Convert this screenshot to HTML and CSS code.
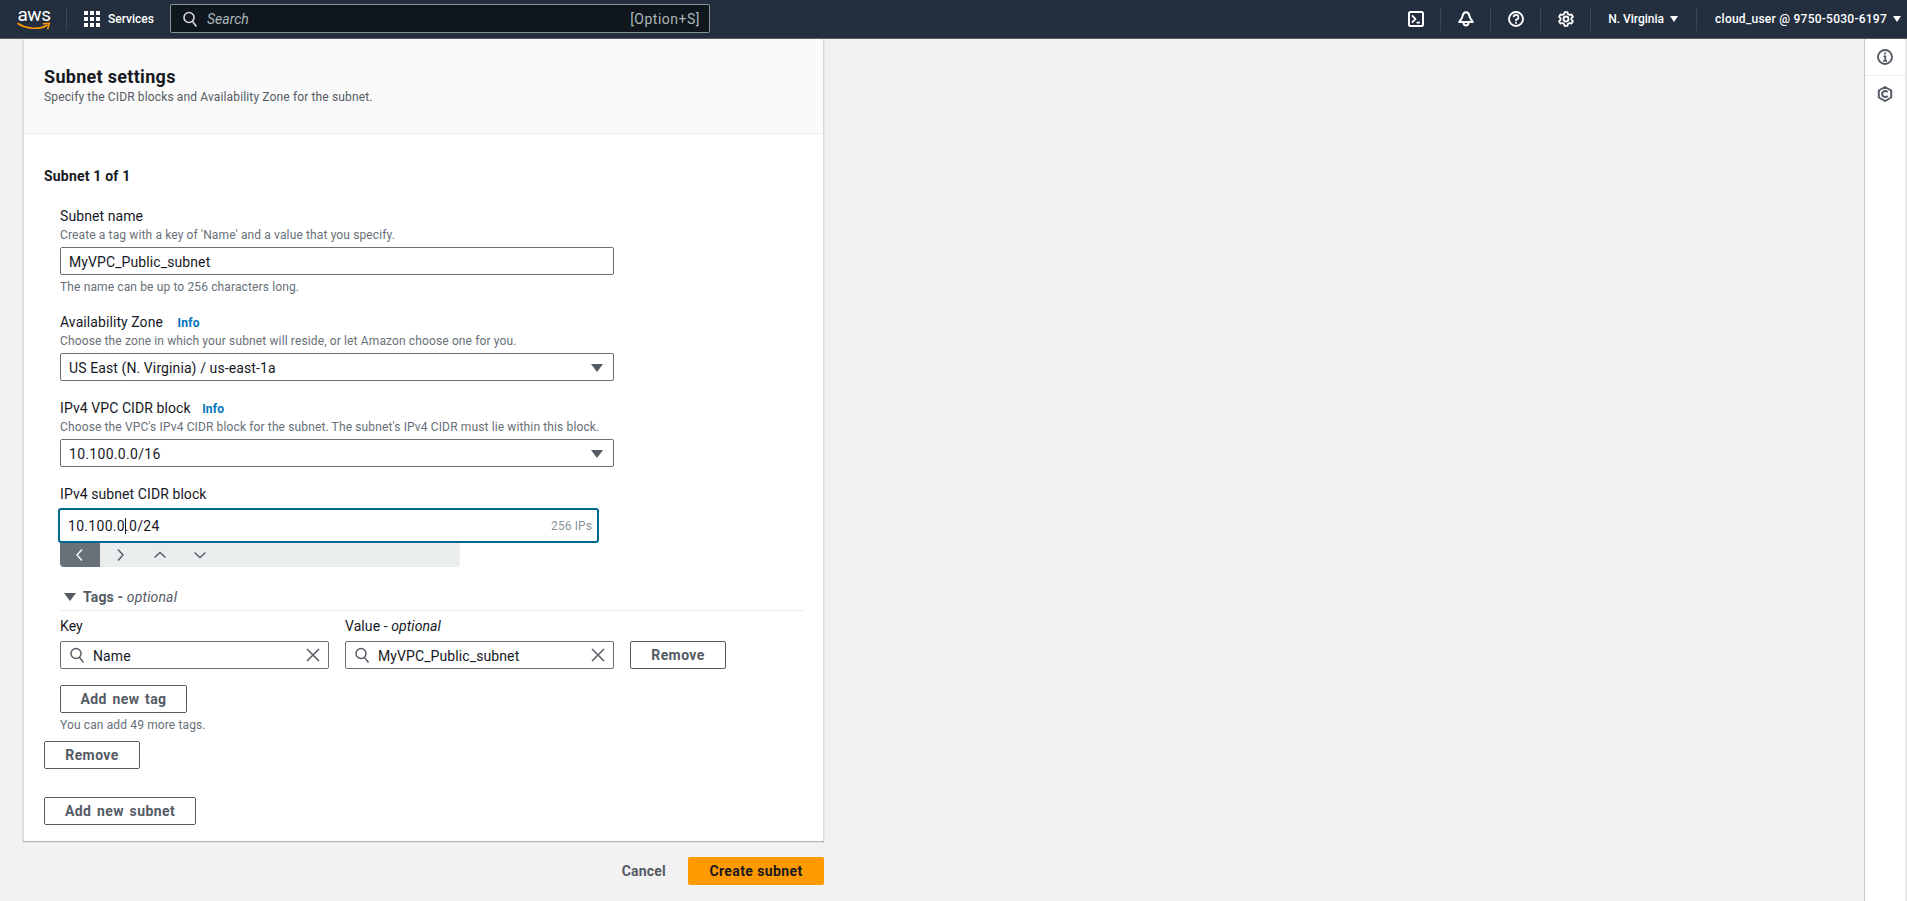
FILE: index.html
```html
<!DOCTYPE html>
<html lang="en">
<head>
<meta charset="utf-8">
<title>Create subnet</title>
<link rel="stylesheet" href="styles.css">
</head>
<body>
<header class="topbar">
  <a class="logo">
    <span class="logo-text">aws</span>
    <svg class="logo-smile" viewBox="0 0 34 9" width="34" height="9"><path d="M1 1.5C9 7 22 8 30 3.2" fill="none" stroke="#f90" stroke-width="1.6" stroke-linecap="round"/><path d="M26.5 1.8 32.4 1.2 30.8 6.6" fill="none" stroke="#f90" stroke-width="1.5" stroke-linecap="round" stroke-linejoin="round"/></svg>
  </a>
  <span class="sep sep-logo"></span>
  <a class="services">
    <svg class="grid-icon" viewBox="0 0 16 16" width="16" height="16"><path d="M0 0h4v4H0zM6 0h4v4H6zM12 0h4v4h-4zM0 6h4v4H0zM6 6h4v4H6zM12 6h4v4h-4zM0 12h4v4H0zM6 12h4v4H6zM12 12h4v4h-4z" fill="#fff"/></svg>
    <span>Services</span>
  </a>
  <div class="search">
    <svg viewBox="0 0 16 16" width="16" height="16"><circle cx="7" cy="6.5" r="5" fill="none" stroke="#d5dbdb" stroke-width="1.6"/><path d="M10.5 10.5l4 5" stroke="#d5dbdb" stroke-width="1.6"/></svg>
    <span class="search-text">Search</span>
    <span class="search-key">[Option+S]</span>
  </div>
  <div class="top-right">
    <a class="top-icon"><svg viewBox="0 0 16 16" width="16" height="16"><rect x="1" y="1" width="14" height="14" rx="1.5" fill="none" stroke="#fff" stroke-width="2"/><path d="M4 4.4 7.4 8 4 11.6" fill="none" stroke="#fff" stroke-width="1.8"/><path d="M8.5 11.6h3.4" stroke="#fff" stroke-width="1.8"/></svg></a>
    <span class="sep"></span>
    <a class="top-icon"><svg viewBox="0 0 16 16" width="16" height="16"><path d="M8 1.2c2 0 3 1.6 3.4 3.6.3 1.7.9 2.8 1.8 3.8l1.6 2.4H1.2l1.6-2.4c.9-1 1.500-2.100 1.800-3.800C5 2.800 6 1.200 8 1.200z" fill="none" stroke="#fff" stroke-width="2" stroke-linejoin="round"/><path d="M5.600 12a2.400 2.400 0 0 0 4.800 0" fill="none" stroke="#fff" stroke-width="2"/></svg></a>
    <span class="sep"></span>
    <a class="top-icon"><svg viewBox="0 0 16 16" width="16" height="16"><circle cx="8" cy="8" r="7" fill="none" stroke="#fff" stroke-width="1.900"/><path d="M5.600 6.200A2.400 2.400 0 1 1 8 8.600v1.300" fill="none" stroke="#fff" stroke-width="1.700"/><path d="M8 10.800v1.900" stroke="#fff" stroke-width="1.700"/></svg></a>
    <span class="sep"></span>
    <a class="top-icon"><svg viewBox="0 0 16 16" width="16" height="16"><circle cx="8" cy="8" r="2.500" fill="none" stroke="#fff" stroke-width="1.800"/><path d="M6.600 1.100h2.800l.5 1.900 1.700 1 1.900-.6 1.400 2.400-1.400 1.300v1.800l1.400 1.300-1.400 2.400-1.900-.6-1.700 1-.5 1.900H6.600l-.5-1.900-1.700-1-1.900.6L1.100 10.200l1.400-1.300V7.100L1.100 5.800l1.400-2.400 1.900.6 1.700-1z" fill="none" stroke="#fff" stroke-width="1.800" stroke-linejoin="round"/></svg></a>
    <span class="sep"></span>
    <a class="top-menu region"><span>N. Virginia</span><i class="tri-white"></i></a>
    <span class="sep"></span>
    <a class="top-menu account"><span>cloud_user @ 9750-5030-6197</span><i class="tri-white"></i></a>
  </div>
</header>

<div class="page">
  <main class="content">
    <section class="card">
      <div class="card-head">
        <h2>Subnet settings</h2>
        <p>Specify the CIDR blocks and Availability Zone for the subnet.</p>
      </div>
      <div class="card-body">
        <h3 class="subnet-title">Subnet 1 of 1</h3>
        <div class="subnet">
          <div class="field">
            <div class="label">Subnet name</div>
            <div class="desc">Create a tag with a key of 'Name' and a value that you specify.</div>
            <div class="input">MyVPC_Public_subnet</div>
            <div class="hint">The name can be up to 256 characters long.</div>
          </div>
          <div class="field">
            <div class="label">Availability Zone <a class="info info-wide">Info</a></div>
            <div class="desc">Choose the zone in which your subnet will reside, or let Amazon choose one for you.</div>
            <div class="input select"><span>US East (N. Virginia) / us-east-1a</span><i class="tri-dark"></i></div>
          </div>
          <div class="field">
            <div class="label">IPv4 VPC CIDR block <a class="info">Info</a></div>
            <div class="desc">Choose the VPC's IPv4 CIDR block for the subnet. The subnet's IPv4 CIDR must lie within this block.</div>
            <div class="input select num"><span>10.100.0.0/16</span><i class="tri-dark"></i></div>
          </div>
          <div class="field field-cidr">
            <div class="label">IPv4 subnet CIDR block</div>
            <div class="cidr-input"><span>10.100.0<span class="caret"></span>.0/24</span><small>256 IPs</small></div>
            <div class="cidr-tools">
              <a class="tool active"><svg viewBox="0 0 16 16" width="16" height="16"><path d="M10 2.500 5 8l5 5.500" fill="none" stroke="#fff" stroke-width="1.400"/></svg></a>
              <a class="tool"><svg viewBox="0 0 16 16" width="16" height="16"><path d="M6 2.500 11 8l-5 5.500" fill="none" stroke="#545b64" stroke-width="1.400"/></svg></a>
              <a class="tool"><svg viewBox="0 0 16 16" width="16" height="16"><path d="M2.500 10.500 8 5.500l5.500 5" fill="none" stroke="#545b64" stroke-width="1.400"/></svg></a>
              <a class="tool"><svg viewBox="0 0 16 16" width="16" height="16"><path d="M2.500 5.500 8 10.500l5.500-5" fill="none" stroke="#545b64" stroke-width="1.400"/></svg></a>
            </div>
          </div>
          <div class="tags">
            <div class="tags-head"><i class="tri-dark"></i><span class="tags-title">Tags - <em>optional</em></span></div>
            <div class="tag-row">
              <div class="tag-col">
                <div class="label">Key</div>
                <div class="input search-input">
                  <svg viewBox="0 0 16 16" width="16" height="16"><circle cx="7" cy="6.500" r="5" fill="none" stroke="#545b64" stroke-width="1.400"/><path d="M10.500 10.500l4 5" stroke="#545b64" stroke-width="1.400"/></svg>
                  <span>Name</span>
                  <svg class="clear" viewBox="0 0 16 16" width="16" height="16"><path d="M2 2l12 12M14 2 2 14" stroke="#545b64" stroke-width="1.500"/></svg>
                </div>
              </div>
              <div class="tag-col">
                <div class="label">Value - <em>optional</em></div>
                <div class="input search-input">
                  <svg viewBox="0 0 16 16" width="16" height="16"><circle cx="7" cy="6.500" r="5" fill="none" stroke="#545b64" stroke-width="1.400"/><path d="M10.500 10.500l4 5" stroke="#545b64" stroke-width="1.400"/></svg>
                  <span>MyVPC_Public_subnet</span>
                  <svg class="clear" viewBox="0 0 16 16" width="16" height="16"><path d="M2 2l12 12M14 2 2 14" stroke="#545b64" stroke-width="1.500"/></svg>
                </div>
              </div>
              <a class="btn btn-remove-tag">Remove</a>
            </div>
            <a class="btn btn-wide btn-add-tag">Add new tag</a>
            <div class="hint hint-tags">You can add 49 more tags.</div>
          </div>
        </div>
        <a class="btn btn-remove">Remove</a>
        <a class="btn btn-wide btn-add-subnet">Add new subnet</a>
      </div>
    </section>
    <div class="actions">
      <a class="cancel">Cancel</a>
      <a class="btn-primary">Create subnet</a>
    </div>
  </main>
  <aside class="rail">
    <a class="rail-item"><svg viewBox="0 0 16 16" width="16" height="16"><circle cx="8" cy="8" r="7" fill="none" stroke="#545b64" stroke-width="1.900"/><path d="M8 3.400v2.200M6.400 7.400H8.300v4.200M6.200 11.800h3.800" fill="none" stroke="#545b64" stroke-width="1.800"/></svg></a>
    <a class="rail-item"><svg viewBox="0 0 16 16" width="16" height="16"><path d="M8 1 14.200 4.500v7L8 15l-6.200-3.500v-7z" fill="none" stroke="#545b64" stroke-width="2" stroke-linejoin="round"/><path d="M10.600 6.300A3 3 0 1 0 10.600 9.700" fill="none" stroke="#545b64" stroke-width="2"/></svg></a>
  </aside>
</div>
</body>
</html>
```
FILE: styles.css
```css
* { box-sizing: border-box; }
html, body { margin: 0; height: 100%; }
body {
  font-family: Roboto, "Noto Sans", "Liberation Sans", sans-serif;
  font-size: 14px;
  color: #16191f;
  background: #f2f2f2;
  overflow: hidden;
}
a { color: inherit; text-decoration: none; }
h2, h3, p { margin: 0; }

.topbar {
  height: 39px;
  background: #232f3e;
  border-bottom: 1px solid #545b64;
  display: flex;
  align-items: center;
  color: #fff;
}
.logo {
  width: 34px;
  margin-left: 17px;
  display: flex;
  flex-direction: column;
  align-items: center;
  height: 28px;
  padding-top: 1px;
}
.logo-text { font-size: 19px; line-height: 17px; height: 16px; font-weight: 400; letter-spacing: -.5px; }
.logo-smile { display: block; }
.sep { width: 1px; height: 22px; background: #3b4756; flex: none; }
.sep-logo { margin-left: 15px; }
.services { display: flex; align-items: center; gap: 8px; margin-left: 17px; font-size: 12px; font-weight: 500; width: 69px; flex: none; }
.grid-icon { flex: none; }
.search {
  width: 540px;
  height: 29px;
  margin-left: 17px;
  margin-top: -1px;
  background: #10161e;
  border: 1px solid #879596;
  border-radius: 2px;
  display: flex;
  align-items: center;
  padding: 0 9px 0 11px;
  color: #aab7b8;
}
.search svg { flex: none; }
.search-text { font-style: italic; margin-left: 9px; flex: 1; }
.search-key { letter-spacing: .5px; }
.top-right { margin-left: auto; display: flex; align-items: center; height: 100%; }
.top-icon { width: 49px; display: flex; justify-content: center; align-items: center; margin-top: -1px; }
.top-right .sep { height: 24px; margin-top: -1px; }
.top-menu { display: flex; align-items: center; font-size: 12px; font-weight: 500; }
.region { padding: 0 18px 0 17px; gap: 6px; }
.account { padding: 0 6px 0 18px; gap: 6px; letter-spacing: .25px; }
.tri-white { width: 0; height: 0; border: 4px solid transparent; border-top: 6px solid #fff; border-bottom: 0; display: block; }

.page { display: flex; height: 862px; }
.content { width: 1864px; padding-left: 23px; flex: none; }
.card {
  width: 801px;
  background: #fff;
  border: 1px solid #d5dbdb;
  border-top: 0;
  border-bottom: 0;
  box-shadow: 0 1px 1px 0 rgba(0, 28, 36, .3);
  height: 802px;
  display: flex;
  flex-direction: column;
}
.card-head {
  height: 95px;
  background: #fafafa;
  border-bottom: 1px solid #eaeded;
  padding: 26px 20px 0;
}
.card-head h2 { font-size: 18px; line-height: 23px; font-weight: 700; letter-spacing: .3px; }
.card-head p { font-size: 12px; line-height: 16px; color: #545b64; margin-top: 1px; letter-spacing: .14px; }
.card-body { padding: 32px 20px 0; }
.subnet-title { font-size: 14px; line-height: 20px; font-weight: 700; margin-bottom: 20px; letter-spacing: .2px; }
.subnet { padding-left: 16px; }
.label { font-size: 14px; line-height: 20px; color: #16191f; letter-spacing: .08px; }
.info { font-size: 12px; line-height: 1; font-weight: 700; color: #0073bb; margin-left: 8px; letter-spacing: .2px; }
.info-wide { margin-left: 11px; }
.desc { font-size: 12px; line-height: 16px; color: #687078; margin: 1px 0 4px; letter-spacing: .13px; }
.hint { font-size: 12px; line-height: 16px; color: #687078; margin-top: 4px; letter-spacing: .13px; }
.input {
  height: 28px;
  width: 554px;
  border: 1px solid #687078;
  border-radius: 2px;
  padding: 1px 8px 0;
  display: flex;
  align-items: center;
  font-size: 14px;
  background: #fff;
  letter-spacing: .1px;
}
.select { justify-content: space-between; padding-right: 10px; }
.num { letter-spacing: .3px; }
.tri-dark { width: 0; height: 0; border: 6px solid transparent; border-top: 8px solid #545b64; border-bottom: 0; display: block; }
.field { margin-bottom: 17px; }
.field-cidr { margin-bottom: 0; }
.field-cidr .label { margin-bottom: 4px; }
.cidr-input {
  width: 541px;
  height: 35px;
  margin-left: -2px;
  border: 2px solid #00688f;
  border-radius: 3px;
  display: flex;
  justify-content: space-between;
  align-items: center;
  padding: 0 5px 0 8px;
  font-size: 14px;
  letter-spacing: .3px;
}
.cidr-input small { font-size: 12px; color: #879596; letter-spacing: .1px; }
.caret { display: inline-block; width: 1px; height: 16px; background: #16191f; vertical-align: -3px; margin-right: -1px; }
.cidr-tools {
  width: 400px;
  height: 24px;
  background: #eaeded;
  border-radius: 0 0 4px 4px;
  display: flex;
  overflow: hidden;
}
.tool { width: 40px; display: flex; align-items: center; justify-content: center; }
.tool.active { background: #687078; }
.tags { margin-top: 20px; }
.tags-head { height: 24px; border-bottom: 1px solid #eaeded; display: flex; align-items: flex-start; padding-left: 4px; gap: 7px; width: 744px; line-height: 20px; }
.tags-head .tri-dark { margin-top: 6px; }
.tags-title { font-weight: 700; color: #545b64; letter-spacing: .15px; }
.tags-title em { font-weight: 400; }
.tag-row { display: flex; align-items: flex-end; gap: 16px; margin-top: 5px; }
.tag-col { width: 269px; }
.tag-col .label { margin-bottom: 5px; }
.search-input { width: 100%; gap: 8px; padding: 0 7px 0 8px; }
.search-input svg { flex: none; }
.search-input span { flex: 1; padding-top: 1px; }
.btn {
  display: flex;
  align-items: center;
  justify-content: center;
  height: 28px;
  border: 1px solid #545b64;
  border-radius: 2px;
  color: #545b64;
  font-weight: 700;
  background: #fff;
  letter-spacing: .4px;
}
.btn-wide { word-spacing: 1.8px; }
.btn-remove-tag { width: 96px; }
.btn-add-tag { width: 127px; margin-top: 16px; }
.hint-tags { margin-top: 4px; }
.btn-remove { width: 96px; margin-top: 8px; }
.btn-add-subnet { width: 152px; margin-top: 28px; }
.actions { display: flex; justify-content: flex-end; align-items: center; width: 801px; margin-top: 16px; gap: 22px; }
.cancel { font-weight: 700; color: #545b64; letter-spacing: .2px; }
.btn-primary {
  width: 136px;
  height: 28px;
  background: #f90;
  border-radius: 2px;
  color: #16191f;
  font-weight: 700;
  letter-spacing: .4px;
  display: flex;
  align-items: center;
  justify-content: center;
}
.rail { flex: 1; background: #fff; border-left: 1px solid #c4c8c8; border-right: 2px solid #e6e8e8; }
.rail-item { display: flex; align-items: center; justify-content: center; height: 37px; border-bottom: 1px solid #eaeded; }
.rail-item:last-child { border-bottom: 0; height: 36px; }
```
